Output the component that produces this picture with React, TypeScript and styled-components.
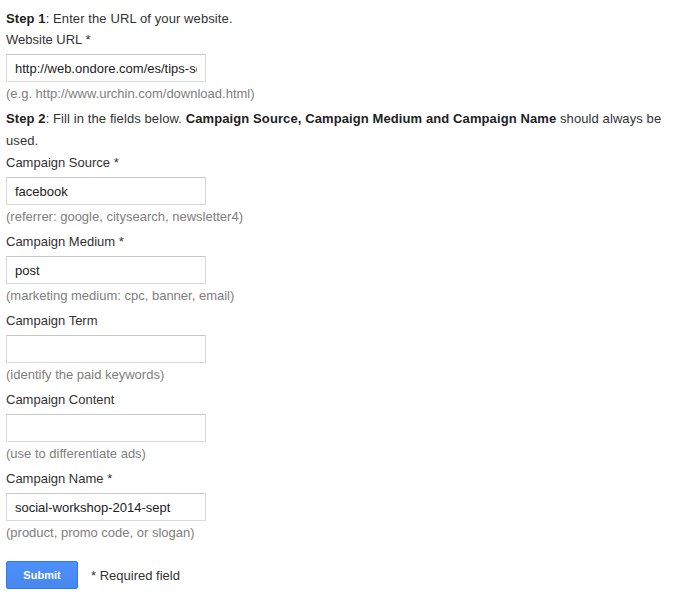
import React from "react";
import styled, { createGlobalStyle } from "styled-components";

const GlobalStyle = createGlobalStyle`
  html, body {
    margin: 0;
    padding: 0;
    background: #ffffff;
  }
  body {
    font-family: "Liberation Sans", Arial, Helvetica, sans-serif;
    font-size: 13px;
    color: #333333;
  }
`;

const Page = styled.form`
  padding: 8px 6px 10px 6px;
  width: 664px;
  display: flex;
  flex-direction: column;
`;

const Para = styled.div<{ $mt?: number }>`
  line-height: 22px;
  margin-top: ${(p) => p.$mt ?? 0}px;
  color: #333333;
  letter-spacing: 0.1px;
  b {
    font-weight: bold;
    color: #222222;
  }
`;

const Label = styled.label<{ $mt?: number }>`
  display: block;
  line-height: 20px;
  margin-top: ${(p) => p.$mt ?? 0}px;
  color: #333333;
`;

const Input = styled.input`
  box-sizing: border-box;
  width: 200px;
  height: 28px;
  margin-top: 4px;
  padding: 0 8px;
  border: 1px solid #d9d9d9;
  border-top-color: #c8c8c8;
  border-radius: 1px;
  font-family: "Liberation Sans", Arial, Helvetica, sans-serif;
  font-size: 13px;
  color: #222222;
  background: #ffffff;
  outline: none;
`;

const Hint = styled.div`
  line-height: 20px;
  margin-top: 2px;
  color: #808080;
`;

const Actions = styled.div`
  display: flex;
  align-items: center;
  gap: 13px;
  margin-top: 18px;
`;

const SubmitButton = styled.button`
  box-sizing: border-box;
  width: 72px;
  height: 28px;
  border: 1px solid #3079ed;
  border-radius: 2px;
  background: linear-gradient(#4d90fe, #4787ed);
  color: #ffffff;
  font-family: "Liberation Sans", Arial, Helvetica, sans-serif;
  font-size: 11px;
  font-weight: bold;
  cursor: pointer;
  padding: 0;
`;

const Note = styled.span`
  color: #333333;
`;

type Field = { label: string; value: string; hint: string };

const fields: Field[] = [
  { label: "Campaign Source *", value: "facebook", hint: "(referrer: google, citysearch, newsletter4)" },
  { label: "Campaign Medium *", value: "post", hint: "(marketing medium: cpc, banner, email)" },
  { label: "Campaign Term", value: "", hint: "(identify the paid keywords)" },
  { label: "Campaign Content", value: "", hint: "(use to differentiate ads)" },
  { label: "Campaign Name *", value: "social-workshop-2014-sept", hint: "(product, promo code, or slogan)" },
];

export default function App() {
  return (
    <>
      <GlobalStyle />
      <Page onSubmit={(e) => e.preventDefault()}>
        <Para>
          <b>Step 1</b>: Enter the URL of your website.
        </Para>
        <Label $mt={0}>Website URL *</Label>
        <Input defaultValue="http://web.ondore.com/es/tips-social-workshop" />
        <Hint>(e.g. http://www.urchin.com/download.html)</Hint>
        <Para $mt={4}>
          <b>Step 2</b>: Fill in the fields below. <b>Campaign Source, Campaign Medium and Campaign Name</b> should always be used.
        </Para>
        {fields.map((f, i) => (
          <React.Fragment key={f.label}>
            <Label $mt={i === 0 ? 1 : 5}>{f.label}</Label>
            <Input defaultValue={f.value} />
            <Hint>{f.hint}</Hint>
          </React.Fragment>
        ))}
        <Actions>
          <SubmitButton type="submit">Submit</SubmitButton>
          <Note>* Required field</Note>
        </Actions>
      </Page>
    </>
  );
}
